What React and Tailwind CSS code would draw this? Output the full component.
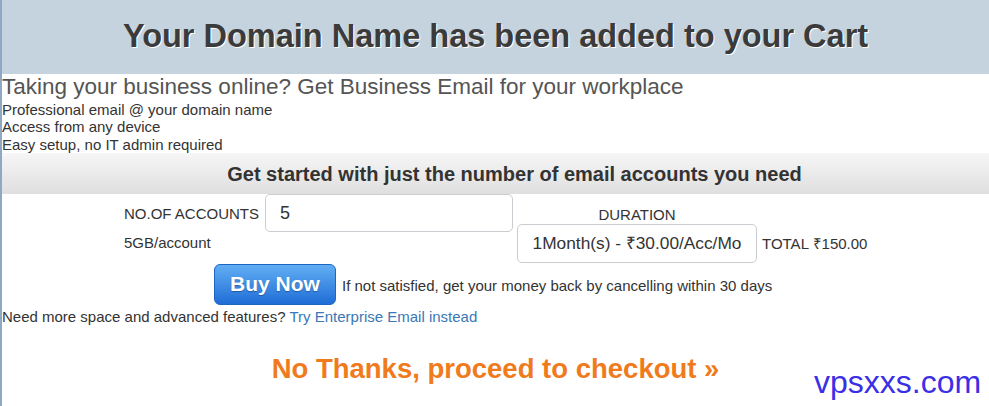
export default function App() {
  return (
    <div className="w-[989px] h-[406px] overflow-hidden bg-white relative" style={{ fontFamily: '"Liberation Sans", Arial, sans-serif' }}>
      <div className="border-l-2 border-[#8fa9c4] h-full flex flex-col">
        <div className="h-[74px] shrink-0 bg-[#c5d3de] flex items-center justify-center">
          <h1 className="text-[32.5px] leading-[38px] font-bold text-[#3b3b3b] [text-shadow:1px_1px_0_#ffffff] -mt-[2px]">Your Domain Name has been added to your Cart</h1>
        </div>
        <div className="text-[22.5px] leading-[26px] text-[#555]">Taking your business online? Get Business Email for your workplace</div>
        <div className="text-[15px] leading-[17.5px] text-[#333] mt-[0.5px]">
          <div>Professional email @ your domain name</div>
          <div>Access from any device</div>
          <div>Easy setup, no IT admin required</div>
        </div>
        <div className="h-[41px] shrink-0 bg-gradient-to-b from-[#f6f6f6] to-[#dfdfdf] flex items-center justify-center pl-[38px]">
          <div className="text-[20px] leading-[24px] font-bold text-[#333]">Get started with just the number of email accounts you need</div>
        </div>
        <div className="flex pl-[122px]">
          <div className="flex flex-col">
            <div className="flex items-center">
              <span className="text-[15px] leading-[17px] text-[#333] mr-[6px]">NO.OF ACCOUNTS</span>
              <div className="w-[248px] h-[38px] border border-[#c9ccd0] rounded-[5px] flex items-center pl-[14px] text-[18px] text-[#333]">5</div>
            </div>
            <div className="text-[15px] leading-[17px] text-[#333] mt-[2px]">5GB/account</div>
          </div>
          <div className="flex flex-col ml-[4px] mt-[12px]">
            <div className="text-[15px] leading-[17px] text-[#333] text-center w-[240px]">DURATION</div>
            <div className="flex items-center mt-[1px]">
              <div className="w-[240px] h-[39px] border border-[#c9ccd0] rounded-[5px] flex items-center justify-center text-[17.3px] text-[#333]">1Month(s) - ₹30.00/Acc/Mo</div>
              <span className="text-[15px] leading-[17px] text-[#333] ml-[5px]">TOTAL ₹150.00</span>
            </div>
          </div>
        </div>
        <div className="flex items-center pl-[212px] mt-[0.5px]">
          <div className="w-[122px] h-[41px] rounded-[6px] bg-gradient-to-b from-[#62aef4] to-[#1e6dd6] border border-[#1f66c2] flex items-center justify-center text-white font-bold text-[21px] [text-shadow:0_1px_1px_rgba(0,0,0,0.3)]">Buy Now</div>
          <span className="text-[15px] leading-[17px] text-[#333] ml-[6px] mt-[3px]">If not satisfied, get your money back by cancelling within 30 days</span>
        </div>
        <div className="text-[15px] leading-[17px] text-[#333] mt-[3px]">Need more space and advanced features? <span className="text-[#3a78b6]">Try Enterprise Email instead</span></div>
        <div className="flex justify-center mt-[28px]">
          <span className="text-[27.5px] leading-[31px] font-bold text-[#f07b1d]">No Thanks, proceed to checkout »</span>
        </div>
      </div>
      <div className="absolute left-[814px] top-[366px] text-[32px] leading-[32px] text-[#3b2fe6]">vpsxxs.com</div>
    </div>
  );
}
